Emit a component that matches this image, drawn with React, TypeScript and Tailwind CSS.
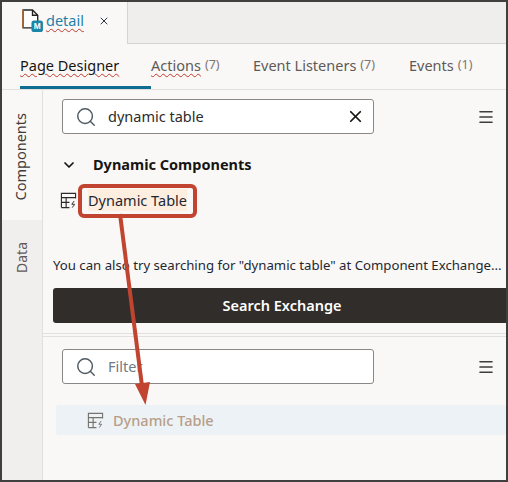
import React from 'react'
import { Menu, Search, X, ChevronDown } from 'lucide-react'

const font = "[font-family:'Noto_Sans','Open_Sans',sans-serif]"

function TableIcon({ className }: { className: string }) {
  return (
    <svg viewBox="0 0 18 18" fill="none" stroke="currentColor" strokeWidth="1.2" className={className}>
      <path d="M1.5 16.5V1.5H16.5V7M1.5 6H16.5M1.5 11H10M1.5 16.5H10M6.5 6V16.5" />
      <path d="M15 9.5L12.5 13H15.5L13 16.5" strokeWidth="1" />
    </svg>
  )
}

function PageIcon() {
  return (
    <svg viewBox="0 0 20 22" className="h-[23px] w-[21px] shrink-0" fill="none">
      <path d="M1 1H10L15 6V18H1Z" fill="#fff" stroke="#222" strokeWidth="1.3" />
      <path d="M1 1V18" stroke="#b5651d" strokeWidth="1.5" />
      <path d="M10 1V6H15" stroke="#222" strokeWidth="1.3" />
      <rect x="9" y="11" width="11" height="11" rx="2.5" fill="#1a86a8" />
      <text x="14.5" y="19.5" textAnchor="middle" fontSize="8" fontWeight="700" fill="#fff" fontFamily="Liberation Sans">M</text>
    </svg>
  )
}

function SearchBox({ children }: { children: React.ReactNode }) {
  return (
    <div className="flex items-center">
      <div className="flex h-[35px] w-[312px] items-center rounded-[3px] border border-[#8a8785] bg-white pl-[12px] pr-[8px]">
        <Search className="h-[22px] w-[22px] shrink-0 text-[#4f5a63]" strokeWidth={1.6} />
        {children}
      </div>
      <Menu className="ml-[103px] h-[18px] w-[18px] text-[#3f3c3a]" strokeWidth={2.2} />
    </div>
  )
}

function Tab({ label, count, wavy, active, className }: { label: string; count?: string; wavy?: boolean; active?: boolean; className: string }) {
  return (
    <div className={`flex h-[45px] shrink-0 items-center whitespace-nowrap border-b-[3px] pt-[1px] text-[14.5px] ${active ? 'border-[#0f6d8f] text-[#161513]' : 'border-transparent text-[#5f5a58]'} ${className}`}>
      <span className={wavy ? 'underline decoration-[#c0392b] decoration-wavy decoration-1 underline-offset-2' : ''}>{label}</span>
      {count && <span className="ml-[4px] text-[12.5px] text-[#7a7573]">{count}</span>}
    </div>
  )
}

export default function App() {
  return (
    <div className={`relative h-[482px] w-[508px] overflow-hidden border-2 border-[#3f3f3f] bg-[#faf8f6] ${font}`}>
      {/* top file tab strip */}
      <div className="flex h-[42px]">
        <div className="flex w-[125px] items-center pl-[20px] pb-[5px]">
          <PageIcon />
          <span className="ml-[3px] text-[14.5px] text-[#1f7fa8] underline decoration-[#c0392b] decoration-wavy decoration-1 underline-offset-2">detail</span>
          <X className="ml-[14px] h-[12px] w-[12px] text-[#2d3a46]" strokeWidth={2} />
        </div>
        <div className="flex-1 border-b border-l border-[#d6d4d2] bg-[#efeeec]" />
      </div>

      {/* designer tabs */}
      <div className="flex h-[46px] border-b border-[#e2e0de] pl-[18px]">
        <Tab label="Page Designer" wavy active className="w-[131px]" />
        <Tab label="Actions" count="(7)" wavy className="w-[102px]" />
        <Tab label="Event Listeners" count="(7)" className="w-[156px]" />
        <Tab label="Events" count="(1)" className="" />
      </div>

      <div className="flex h-[390px]">
        {/* side tabs */}
        <div className="flex w-[41px] shrink-0 flex-col border-r border-[#e2e0de] bg-[#f0efed]">
          <div className="flex h-[130px] items-center justify-center bg-[#faf8f6] pr-[2px] pt-[4px]">
            <span className="rotate-180 text-[14.5px] text-[#3f3c3a] [writing-mode:vertical-rl]">Components</span>
          </div>
          <div className="flex h-[78px] items-center justify-center pb-[3px] pr-[2px]">
            <span className="rotate-180 text-[14px] text-[#5f5a58] [writing-mode:vertical-rl]">Data</span>
          </div>
        </div>

        {/* main panel */}
        <div className="min-w-0 flex-1">
          <div className="pl-[19px] pt-[9px]">
            <SearchBox>
              <span className="ml-[11px] flex-1 text-[14.5px] text-[#2b2b2b]">dynamic table</span>
              <X className="h-[19px] w-[19px] text-[#161513]" strokeWidth={2.2} />
            </SearchBox>
          </div>

          <div className="flex h-[22px] items-center pl-[18px] mt-[20px]">
            <ChevronDown className="h-[16px] w-[16px] text-[#161513]" strokeWidth={2.6} />
            <span className="ml-[16px] text-[14.5px] font-bold text-[#161513]">Dynamic Components</span>
          </div>

          <div className="mt-[13px] flex h-[22px] items-center pl-[17px]">
            <TableIcon className="h-[17px] w-[17px] text-[#2b2b2b]" />
            <span className="ml-[11px] bg-[#fdeee0] text-[14.5px] leading-[22px] text-[#1d2833]">Dynamic Table</span>
          </div>

          <p className="mt-[43px] whitespace-nowrap pl-[10px] text-[13.2px] leading-[22px] text-[#1d2833]">
            You can also try searching for "dynamic table" at Component Exchange...
          </p>

          <div className="mt-[12px] ml-[10px] flex h-[35px] items-center justify-center rounded-l-[3px] bg-[#312d2a] pl-[5px] text-[14.5px] font-semibold text-white">
            Search Exchange
          </div>

          <div className="mt-[10px] h-[4px] border-y border-[#e2e0de]" />

          <div className="pl-[19px] pt-[12px]">
            <SearchBox>
              <span className="ml-[11px] flex-1 text-[14.5px] text-[#6f7a83]">Filter</span>
            </SearchBox>
          </div>

          <div className="mt-[21px] ml-[13px] flex h-[30px] items-center rounded-l-[3px] bg-[#ecf2f5] pl-[31px] pt-[1px]">
            <TableIcon className="h-[17px] w-[17px] text-[#77736f]" />
            <span className="ml-[9px] text-[14.5px] font-medium text-[#b89e88]">Dynamic Table</span>
          </div>
        </div>
      </div>

      {/* callout laid over the screenshot */}
      <div className="absolute left-[76px] top-[182px] h-[34px] w-[119px] rounded-[6px] border-[4px] border-[#c0442f]" />
      <svg className="absolute left-0 top-0 h-[478px] w-[504px]" viewBox="0 0 504 478" fill="none">
        <path d="M118 212L140 384" stroke="#c0442f" strokeWidth="4" />
        <path d="M133 382L148 380L143.5 403Z" fill="#c0442f" />
      </svg>
    </div>
  )
}
